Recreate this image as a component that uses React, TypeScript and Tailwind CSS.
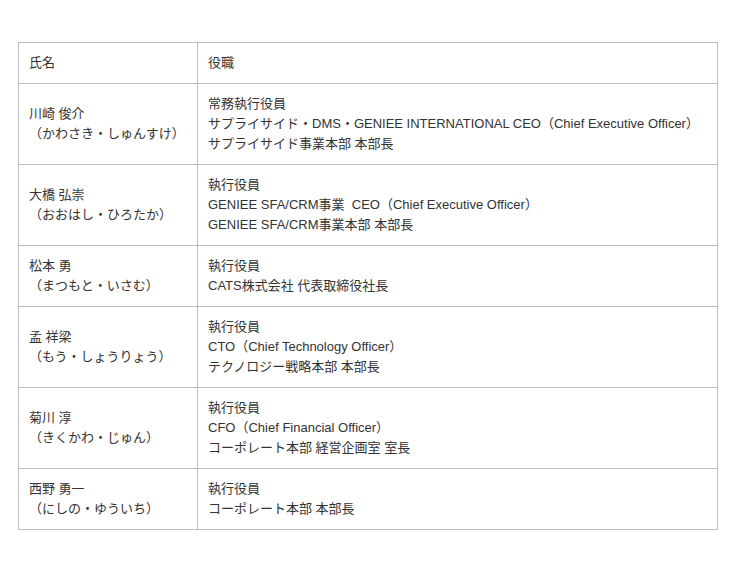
const rows: { name: string; kana: string; roles: string[] }[] = [
  {
    name: "川崎 俊介",
    kana: "（かわさき・しゅんすけ）",
    roles: [
      "常務執行役員",
      "サプライサイド・DMS・GENIEE INTERNATIONAL CEO（Chief Executive Officer）",
      "サプライサイド事業本部 本部長",
    ],
  },
  {
    name: "大橋 弘崇",
    kana: "（おおはし・ひろたか）",
    roles: [
      "執行役員",
      "GENIEE SFA/CRM事業  CEO（Chief Executive Officer）",
      "GENIEE SFA/CRM事業本部 本部長",
    ],
  },
  {
    name: "松本 勇",
    kana: "（まつもと・いさむ）",
    roles: ["執行役員", "CATS株式会社 代表取締役社長"],
  },
  {
    name: "孟 祥梁",
    kana: "（もう・しょうりょう）",
    roles: ["執行役員", "CTO（Chief Technology Officer）", "テクノロジー戦略本部 本部長"],
  },
  {
    name: "菊川 淳",
    kana: "（きくかわ・じゅん）",
    roles: ["執行役員", "CFO（Chief Financial Officer）", "コーポレート本部 経営企画室 室長"],
  },
  {
    name: "西野 勇一",
    kana: "（にしの・ゆういち）",
    roles: ["執行役員", "コーポレート本部 本部長"],
  },
];

export default function App() {
  return (
    <div className="min-h-[570px] w-[740px] bg-white pl-[18px] pt-[42px] font-['Liberation_Sans','Noto_Sans_CJK_JP',sans-serif] text-[13px] leading-[20px] text-[#333]">
      <table className="w-[700px] border-collapse border border-[#bcbcbc]">
        <thead>
          <tr>
            <th className="w-[179px] border border-[#bcbcbc] px-[10px] py-[10px] text-left font-normal">
              氏名
            </th>
            <th className="border border-[#bcbcbc] px-[10px] py-[10px] text-left font-normal">
              役職
            </th>
          </tr>
        </thead>
        <tbody>
          {rows.map((row) => (
            <tr key={row.name}>
              <td className="border border-[#bcbcbc] px-[10px] py-[10px] align-middle whitespace-nowrap">
                <div>{row.name}</div>
                <div>{row.kana}</div>
              </td>
              <td className="border border-[#bcbcbc] px-[10px] py-[10px] align-middle whitespace-pre">
                {row.roles.map((role) => (
                  <div key={role}>{role}</div>
                ))}
              </td>
            </tr>
          ))}
        </tbody>
      </table>
    </div>
  );
}
